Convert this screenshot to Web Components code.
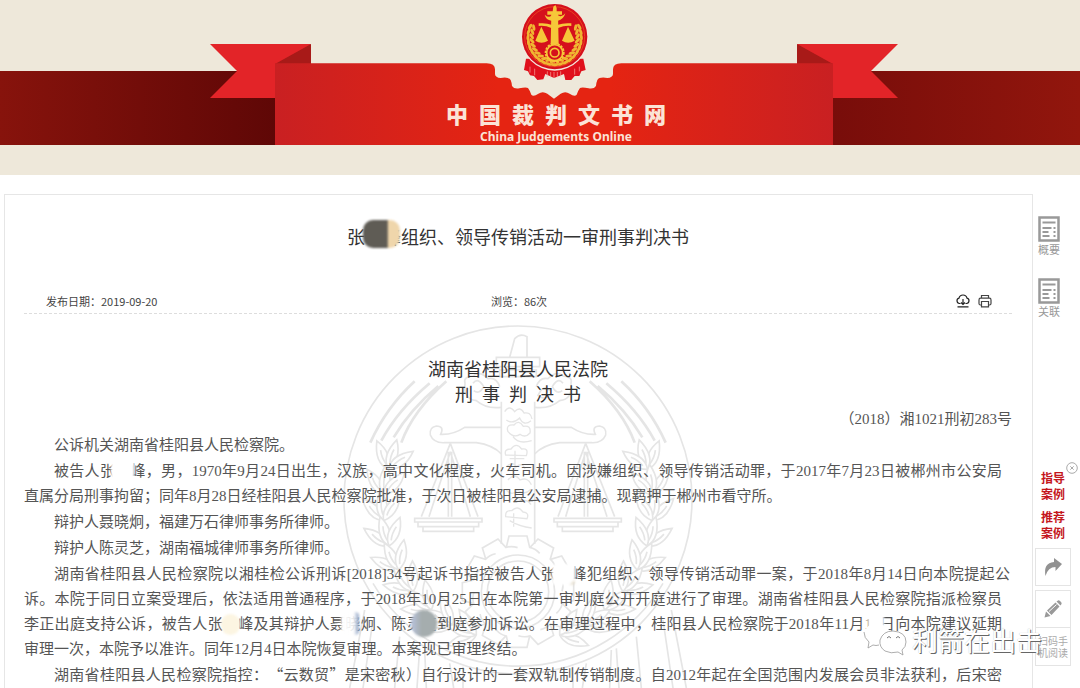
<!DOCTYPE html>
<html lang="zh-CN">
<head>
<meta charset="utf-8">
<title>中国裁判文书网</title>
<style>
  body {
    margin: 0;
    background: #fff;
    color: #444;
    font-family: "Noto Sans CJK SC", sans-serif;
  }
</style>
</head>
<body>
<judgement-page></judgement-page>

<script>
// Banner: dark band across the window, folded ribbon and court emblem in the middle
class SiteBanner extends HTMLElement {
  constructor() {
    super();
    const shadow = this.attachShadow({ mode: 'open' });
    shadow.innerHTML = `
      <style>
        :host {
          display: grid;
          grid-template-rows: 71px 74px 30px;
          background: #eee8da;
        }
        .band {
          grid-area: 2 / 1;
          background: linear-gradient(90deg, #87130c 0%, #5e0706 26%, #5e0706 50%, #780d0a 77%, #92160d 100%);
        }
        .ribbon {
          grid-area: 1 / 1 / 3 / 2;
          display: grid;
          justify-items: center;
          padding-left: 28px;
        }
        .ribbon svg {
          grid-area: 1 / 1;
          width: 688px;
          height: 145px;
        }
        .name {
          grid-area: 1 / 1;
          align-self: end;
          text-align: center;
          color: #fbe3d6;
          padding-left: 4px;
        }
        h1 {
          margin: 0;
          font-size: 22px;
          line-height: 32px;
          font-weight: 900;
          white-space: nowrap;
        }
        p {
          margin: 0;
          font: bold 12px/16px "Noto Sans", sans-serif;
        }
      </style>
      <div class="band"></div>
      <div class="ribbon">
        <svg viewBox="210 0 688 145" aria-hidden="true">
          <defs>
            <linearGradient id="face">
              <stop offset="0" stop-color="#c92022"/>
              <stop offset=".4" stop-color="#e52412"/>
              <stop offset=".6" stop-color="#e52412"/>
              <stop offset="1" stop-color="#c92022"/>
            </linearGradient>
          </defs>
          <path fill="#eee8da" d="M480 60H630V104H480Z"/>
          <path fill="#e32428" d="M210 44H311L276 98H210L237 71ZM898 44H797L832 98H898L871 71Z"/>
          <path fill="#a81a18" d="M311 44V64H275ZM797 44V64H833Z"/>
          <g transform="translate(430 0) scale(.33333)">
            <path fill="url(#face)" d="M-465 190H170Q195 190 195 208V222Q196 233 212 234Q236 230 242 240Q246 250 246 258Q252 268 268 265Q288 260 294 264Q300 272 304 284Q310 292 325 281Q338 272 352 281L372 296L392 281Q406 272 419 281Q434 292 440 284Q444 272 450 264Q456 260 476 265Q492 268 498 258Q498 250 502 240Q508 230 532 234Q548 233 549 222V208Q549 190 574 190H1209V435H-465Z"/>
            <path fill="#e0101c" d="M288 176L282 210L294 214L300 226L312 228L322 240L340 238L346 222L372 234L402 222L406 240L424 240L434 228L448 228L454 214L467 210L460 176Z"/>
            <path stroke="#f7a9a0" stroke-width="2" fill="none" d="M300 200V218M314 206V226M434 206V224M448 200V214M352 214V230M362 216V232M372 216V234M382 216V232M392 214V230"/>
            <circle cx="374" cy="111" r="101" fill="#f4e9dc"/>
            <circle cx="374" cy="110" r="98" fill="#d5101c"/>
            <circle cx="374" cy="110" r="90" fill="none" stroke="#e8401f" stroke-width="3"/>
            ${wheat(1)}${wheat(-1)}
            <g fill="#f6c739">
              <path d="M364 44H384L386 132H362ZM370 20L376 15L380 24V34H396V44H352V34H368Z"/>
              <path d="M344 44Q358 56 364 46H384Q396 54 406 40Q400 60 384 62H364Q348 60 344 44Z"/>
              <path d="M326 70Q350 68 364 74H384Q400 68 424 70L424 78Q404 76 384 84H364Q346 76 326 78Z"/>
              <path d="M334 80L316 122Q334 134 354 122ZM414 80L396 122Q414 134 434 122Z"/>
            </g>
            <circle cx="374" cy="158" r="26" fill="none" stroke="#f6c739" stroke-width="8" stroke-dasharray="7 3"/>
            <circle cx="374" cy="158" r="24" fill="#d5101c" stroke="#f6c739" stroke-width="5"/>
            <circle cx="374" cy="158" r="13" fill="none" stroke="#f6c739" stroke-width="5"/>
          </g>
        </svg>
        <div class="name">
          <h1>中&ensp;国&ensp;裁&ensp;判&ensp;文&ensp;书&ensp;网</h1>
          <p>China Judgements Online</p>
        </div>
      </div>
    `;
  }
}

// One gold ear of wheat on the emblem; side is 1 for right, -1 for left
function wheat(side) {
  let out = '';
  for (let i = 0; i < 11; i++) {
    const a = (88 - i * 11) * Math.PI / 180;
    const x = 374 + side * 74 * Math.cos(a);
    const y = 112 + 76 * Math.sin(a);
    const turn = side * (i * 11 - 10);
    out += `<g transform="translate(${x.toFixed(1)} ${y.toFixed(1)}) rotate(${(-turn).toFixed(0)})">
      <ellipse rx="10" ry="4.5" cy="-6" transform="rotate(${side * 20})"/>
      <ellipse rx="10" ry="4.5" cy="6" transform="rotate(${side * -20})"/></g>`;
  }
  return `<g fill="#f0b632">${out}</g>`;
}

// Pale line drawing of the court emblem behind the judgement
class CourtSeal extends HTMLElement {
  constructor() {
    super();
    const shadow = this.attachShadow({ mode: 'open' });
    const half = `
      <path stroke-width="8" d="M255 184Q170 262 122 368M300 190Q205 270 155 362M326 198Q242 268 192 352M350 184Q250 272 215 368"/>
      <path d="M515 322H405Q370 345 333 343Q345 318 320 318Q298 322 302 345Q312 370 345 368H440Q490 375 515 402"/>
      <path d="M362 370L275 590M362 370L445 590M362 395L298 590M362 395L422 590M356 395V590M366 395V590M255 595H457V606H255ZM265 606H447V620H265ZM280 620H432V634H280Z"/>
      <path d="M515 262Q470 268 440 242Q400 238 406 190Q400 170 430 168Q450 150 475 176Q500 170 510 200M430 190Q445 170 462 200Q450 225 432 212M470 212Q488 190 505 226Q490 240 476 230"/>
      ${ear()}
      <path d="M105 870L60 1104M130 900L100 1104M210 950L195 1104M270 985L262 1104M285 990L290 1104M360 1030L372 1104M400 1040V1104"/>
    `;
    let teeth = '';
    for (let i = 0; i < 12; i++) {
      teeth += `<path transform="rotate(${i * 30} 565 815)" d="M530 682L538 648H592L600 682Q618 686 630 700"/>`;
    }
    shadow.innerHTML = `
      <style>
        :host { display: block; }
        svg { display: block; width: 380px; height: 368px; }
      </style>
      <svg viewBox="-5 0 1140 1104" fill="none" stroke="#e5e5e5" stroke-width="5" aria-hidden="true">
        <circle cx="565" cy="540" r="522"/>
        <path d="M130 790A505 505 0 0 0 1000 790"/>
        <g>${half}</g>
        <g transform="translate(1130 0) scale(-1 1)">${half}</g>
        <path d="M540 112L555 56Q572 38 592 50V112M500 112H630V140H500ZM510 150H620V170H510ZM515 245V672M615 245V672"/>
        <path stroke-width="4" d="M525 275q14-22 30 0q16-18 28 4q20-4 24 18M530 300q20 14 40-6q12 26 34 8M535 335q-8-22 18-20q14-18 28 4q24-4 20 20q-14 16-30 4q-18 12-36-8ZM550 350q16 24 56 12M528 405q-6-18 16-18q16-22 32 0q22-4 14 20ZM540 416h44M556 392v56M530 440q20-18 30 0q18-14 26 6M535 480q20-24 36 0q24-10 34 14M530 510q18 20 34 0q20 18 40-2M540 540q22-16 36 4q16-8 28 10M528 590q-2-20 18-18q18-18 34 4q20 2 12 20ZM540 602q30 18 66 22M552 580v40"/>
        ${teeth}
        <circle cx="565" cy="815" r="110"/>
        <circle cx="565" cy="815" r="92"/>
      </svg>
    `;
  }
}

// Ear of wheat along the left inner edge of the seal, grains pointing up the stem
function ear() {
  let out = '';
  for (let deg = 196; deg >= 106; deg -= 11) {
    const a = deg * Math.PI / 180;
    const x = (565 + 405 * Math.cos(a)).toFixed(0);
    const y = (560 + 405 * Math.sin(a)).toFixed(0);
    for (const spread of [-38, 0, 38]) {
      out += `<path fill="#fff" transform="translate(${x} ${y}) rotate(${deg + 90 + spread})" d="M0 0Q34-32 92 0Q40 30 0 0M18 0Q40-6 62 0"/>`;
    }
  }
  return out;
}

// Text with a smudge laid over it
class SmudgedText extends HTMLElement {
  constructor() {
    super();
    const shadow = this.attachShadow({ mode: 'open' });
    shadow.innerHTML = `
      <style>
        :host {
          display: inline-block;
          position: relative;
        }
        i {
          position: absolute;
          inset: var(--smudge-inset, 2px -4px);
          border-radius: var(--smudge-radius, 4px);
          background: var(--smudge, #fff);
          filter: blur(1px);
        }
      </style>
      <slot></slot><i></i>
    `;
  }
}

class JudgementDocument extends HTMLElement {
  constructor() {
    super();
    const shadow = this.attachShadow({ mode: 'open' });
    shadow.innerHTML = `
      <style>
        :host {
          display: block;
          border: 1px solid #e6e6e6;
          border-bottom: none;
          padding: 27px 20px 0 19px;
        }
        h2 {
          margin: 0;
          text-align: center;
          font-size: 18px;
          line-height: 28px;
          font-weight: 400;
          color: #333;
        }
        .meta {
          display: grid;
          grid-template-columns: 1fr auto 1fr;
          align-items: center;
          margin-top: 39px;
          height: 24px;
          padding: 0 20px 0 22px;
          border-bottom: 1px dashed #ddd;
          font-size: 11px;
          color: #444;
        }
        .tools {
          display: flex;
          justify-content: flex-end;
          gap: 8px;
        }
        .tools button {
          display: block;
          border: none;
          background: none;
          padding: 0;
          height: 14px;
          cursor: pointer;
        }
        .tools svg {
          display: block;
          width: 14px;
          height: 14px;
        }
        article {
          position: relative;
          padding: 42px 0 2px;
          font: 15px/25px "Liberation Serif", "Noto Sans CJK SC", serif;
          color: #555;
          text-spacing-trim: space-all;
        }
        court-seal {
          position: absolute;
          top: 6px;
          left: 50%;
          margin-left: -190px;
        }
        .text {
          position: relative;
        }
        h3 {
          margin: 0;
          text-align: center;
          font: 18px/25px "Noto Sans CJK SC", sans-serif;
          color: #333;
        }
        .number {
          text-align: right;
        }
        .text p {
          margin: 1px 0 0;
        }
        .text p > span {
          display: block;
          white-space: nowrap;
        }
        .text p > span:first-child {
          padding-left: 30px;
        }
        .text p > .full {
          text-align: justify;
          text-align-last: justify;
          white-space: normal;
          padding-right: 10px;
        }
        .text p > .wide {
          padding-right: 2px;
        }
        .quote {
          font-family: "Noto Sans CJK SC", sans-serif;
          line-height: 1;
        }
        .title-name {
          --smudge: linear-gradient(90deg, #5f5c55 66%, #efd6ab 67%);
          --smudge-inset: -2px 1px 2px -2px;
          --smudge-radius: 10px;
        }
        .cream {
          --smudge: #fcf5e2;
          --smudge-inset: 2px -2px;
          --smudge-radius: 10px;
        }
        .blue {
          --smudge: linear-gradient(90deg, #fff, #fffd 70%, #8fa3c4);
          --smudge-inset: 0 1px 2px -4px;
        }
        .grey {
          --smudge: linear-gradient(90deg, #b8c3dd, #a5adae 40%);
          --smudge-inset: -2px 0 0 4px;
          --smudge-radius: 14px;
        }
        .tan {
          --smudge: linear-gradient(135deg, #fff 84%, #cdbd9c);
        }
      </style>
      <h2>张<smudged-text class="title-name">&emsp;峰</smudged-text>组织、领导传销活动一审刑事判决书</h2>
      <div class="meta">
        <span>发布日期：2019-09-20</span>
        <span>浏览：86次</span>
        <div class="tools">
          <button aria-label="下载">
            <svg viewBox="0 0 14 14" fill="none" stroke="#222" stroke-width="1.2"><path d="M4.5 9.5H3.5A2.7 2.7 0 0 1 3 4.2A4.1 4.1 0 0 1 11 4.2A2.7 2.7 0 0 1 10.5 9.5H9.5M7 5V10.5M5 8.5L7 10.5L9 8.5M1.5 12.8H12.5"/></svg>
          </button>
          <button aria-label="打印">
            <svg viewBox="0 0 14 14" fill="none" stroke="#444" stroke-width="1.2"><path d="M3.5 4V1.5H10.5V4M3.5 11H2.5Q1 11 1 9.5V6Q1 4.2 2.5 4.2H11.5Q13 4.2 13 6V9.5Q13 11 11.5 11H10.5M3.5 7.5H10.5V12.8H3.5Z"/></svg>
          </button>
        </div>
      </div>
      <article>
        <court-seal></court-seal>
        <div class="text">
          <h3>湖南省桂阳县人民法院</h3>
          <h3>刑&ensp;事&ensp;判&ensp;决&ensp;书</h3>
          <p class="number">（2018）湘1021刑初283号</p>
          <p><span>公诉机关湖南省桂阳县人民检察院。</span></p>
          <p>
            <span class="full">被告人张<smudged-text>&emsp;</smudged-text>峰，男，1970年9月24日出生，汉族，高中文化程度，火车司机。因涉嫌组织、领导传销活动罪，于2017年7月23日被郴州市公安局</span>
            <span>直属分局刑事拘留；同年8月28日经桂阳县人民检察院批准，于次日被桂阳县公安局逮捕。现羁押于郴州市看守所。</span>
          </p>
          <p><span>辩护人聂晓炯，福建万石律师事务所律师。</span></p>
          <p><span>辩护人陈灵芝，湖南福城律师事务所律师。</span></p>
          <p>
            <span class="full wide">湖南省桂阳县人民检察院以湘桂检公诉刑诉[2018]34号起诉书指控被告人张<smudged-text class="tan">&emsp;</smudged-text>峰犯组织、领导传销活动罪一案，于2018年8月14日向本院提起公</span>
            <span class="full">诉。本院于同日立案受理后，依法适用普通程序，于2018年10月25日在本院第一审判庭公开开庭进行了审理。湖南省桂阳县人民检察院指派检察员</span>
            <span class="full">李正出庭支持公诉，被告人张<smudged-text class="cream">&emsp;</smudged-text>峰及其辩护人聂<smudged-text class="blue">晓</smudged-text>炯、陈<smudged-text class="grey">灵芝</smudged-text>到庭参加诉讼。在审理过程中，桂阳县人民检察院于2018年11月1<smudged-text>&ensp;</smudged-text>日向本院建议延期</span>
            <span>审理一次，本院予以准许。同年12月4日本院恢复审理。本案现已审理终结。</span>
          </p>
          <p>
            <span class="full">湖南省桂阳县人民检察院指控：<span class="quote">“</span>云数贸<span class="quote">”</span>是宋密秋）自行设计的一套双轨制传销制度。自2012年起在全国范围内发展会员非法获利，后宋密</span>
          </p>
        </div>
      </article>
    `;
  }
}

// Narrow tool column to the right of the document
class SideRail extends HTMLElement {
  constructor() {
    super();
    const shadow = this.attachShadow({ mode: 'open' });
    const sheet = `<svg viewBox="0 0 22 26" fill="none" stroke="#999" stroke-width="2"><path d="M1.5 1.5H20.5V24.5H1.5Z" stroke-width="2.5"/><path d="M4.5 6.5H17.5M4.5 12H13.5M15.5 12H17.5M4.5 16H10.5M15.5 16H17.5M4.5 20H11.5M15.5 20H17.5"/></svg>`;
    shadow.innerHTML = `
      <style>
        :host {
          display: block;
          width: 45px;
          padding: 22px 0 0 2px;
        }
        a {
          display: block;
          text-decoration: none;
        }
        .doc {
          width: 28px;
          margin-bottom: 22px;
          font-size: 11px;
          line-height: 14px;
          text-align: center;
          color: #999;
        }
        .doc svg {
          display: block;
          width: 22px;
          height: 26px;
          margin: 0 auto;
        }
        .cases {
          position: relative;
          width: 36px;
          margin-top: 152px;
        }
        .cases a {
          width: 24px;
          margin: 0 auto 7px;
          font-size: 12px;
          line-height: 16px;
          font-weight: 700;
          color: #c4161c;
        }
        .close {
          position: absolute;
          top: -8px;
          right: -7px;
          border: none;
          background: none;
          padding: 0;
        }
        .close svg {
          display: block;
          width: 12px;
          height: 12px;
        }
        .box {
          display: grid;
          place-items: center;
          box-sizing: border-box;
          width: 36px;
          height: 38px;
          border: 1px solid #e4e4e4;
          background: #fff;
          padding: 0;
          font: 10px/12px "Noto Sans CJK SC", sans-serif;
          color: #aaa;
        }
        .share {
          margin-bottom: 4px;
        }
        .scan {
          border-top: none;
        }
        .box svg {
          width: 20px;
          height: 20px;
        }
      </style>
      <a class="doc" href="#summary">${sheet}概要</a>
      <a class="doc" href="#related">${sheet}关联</a>
      <div class="cases">
        <button class="close" aria-label="关闭"><svg viewBox="0 0 12 12" fill="none" stroke="#aaa"><circle cx="6" cy="6" r="5.3"/><path d="M4.3 4.3L7.7 7.7M7.7 4.3L4.3 7.7"/></svg></button>
        <a href="#guide">指导案例</a>
        <a href="#recommend">推荐案例</a>
      </div>
      <button class="box share" aria-label="分享"><svg viewBox="0 0 20 20" fill="#929292"><path d="M11 1L19 7L12.5 14V10Q5 10 2.5 19Q0 6 11 5Z"/></svg></button>
      <button class="box" aria-label="编辑"><svg viewBox="0 0 20 20" fill="#999"><path d="M1.5 18.5L3 12.5L7.5 17ZM4 11.5L12.5 3.5L16.5 7.5L8.5 16ZM13.5 2.5L15 1.5Q16 1 17 2L18 3Q19 4 18.5 5L17.5 6.5Z"/><path d="M6 12.5L13.5 5.5" stroke="#fff"/></svg></button>
      <button class="box scan"><span>扫码手<br>机阅读</span></button>
    `;
  }
}

// Account mark stamped over the lower right corner
class AccountMark extends HTMLElement {
  constructor() {
    super();
    const shadow = this.attachShadow({ mode: 'open' });
    shadow.innerHTML = `
      <style>
        :host {
          display: flex;
          align-items: center;
          gap: 4px;
          color: #fff;
          font-size: 26px;
          line-height: 36px;
          text-shadow: 1px 1px 0 #666, 0 0 1px #bbb;
          white-space: nowrap;
        }
        svg {
          width: 46px;
          height: 36px;
        }
      </style>
      <svg viewBox="0 0 46 36" aria-hidden="true">
        <path fill="#fff" d="M20 22Q15 25 11 23L6 26L7 20Q0 15 3 8Q8 0 18 2Q26 4 28 10"/>
        <path fill="none" stroke="#999" stroke-width=".8" d="M2 10Q2 16 7 20L6 26L11 23Q14 24 17 23"/>
        <path fill="#fff" stroke="#999" stroke-width=".8" d="M31 9Q44 10 44 20Q44 25 40 28L41 33L36 30Q29 32 23 29Q17 25 18 18Q21 9 31 9Z"/>
        <path fill="none" stroke="#777" d="M25 16Q27 13 29 16M34 16Q36 13 38 16"/>
      </svg>
      <span><slot></slot></span>
    `;
  }
}

class JudgementPage extends HTMLElement {
  constructor() {
    super();
    const shadow = this.attachShadow({ mode: 'open' });
    shadow.innerHTML = `
      <style>
        :host {
          display: block;
          position: relative;
        }
        main {
          display: flex;
          padding: 19px 0 0 4px;
        }
        judgement-document {
          flex: 1;
          min-width: 0;
        }
        account-mark {
          position: absolute;
          right: 38px;
          bottom: 32px;
        }
      </style>
      <site-banner></site-banner>
      <main>
        <judgement-document></judgement-document>
        <side-rail></side-rail>
      </main>
      <account-mark>利箭在出击</account-mark>
    `;
  }
}

customElements.define('site-banner', SiteBanner);
customElements.define('court-seal', CourtSeal);
customElements.define('smudged-text', SmudgedText);
customElements.define('judgement-document', JudgementDocument);
customElements.define('side-rail', SideRail);
customElements.define('account-mark', AccountMark);
customElements.define('judgement-page', JudgementPage);
</script>
</body>
</html>
